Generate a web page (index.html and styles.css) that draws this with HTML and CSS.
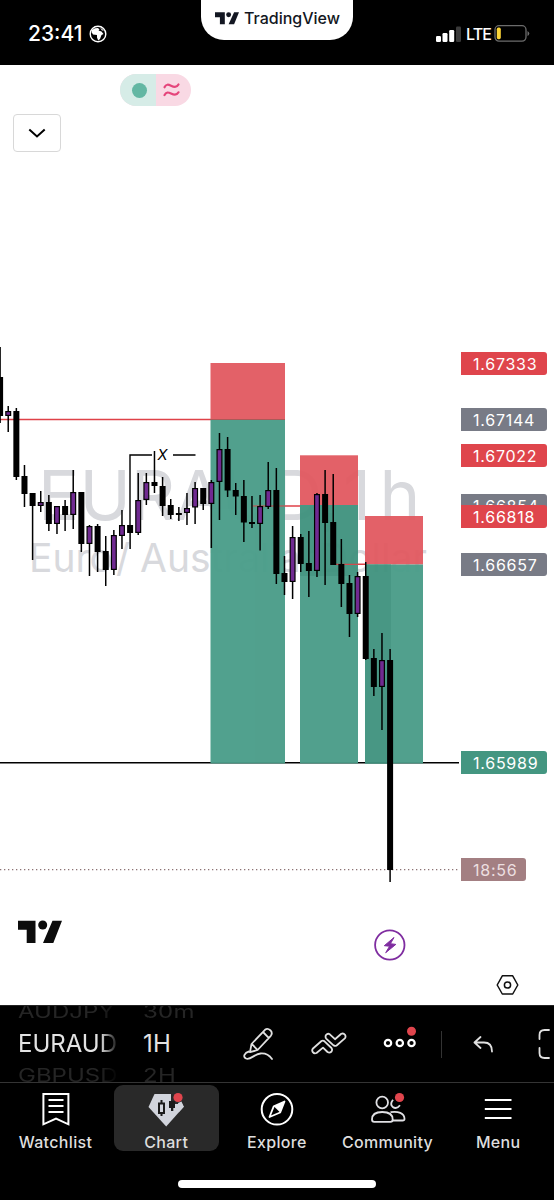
FILE: index.html
```
<!DOCTYPE html>
<html lang="en">
<head>
    <meta charset="UTF-8">
    <meta name="viewport" content="width=device-width, initial-scale=1.0">
    <title>EURAUD Chart</title>
    <link rel="stylesheet" href="styles.css">
</head>
<body>

    <header class="status-bar">
        <div class="clock">
            <span>23:41</span>
            <svg width="18" height="18" viewBox="0 0 18 18">
                <circle cx="9" cy="9" r="7.8" fill="none" stroke="#fff" stroke-width="1.4"/>
                <path d="M3 5L6 3.2L9 3L10.5 4.5L9.5 5.5L12.5 6.5L14.5 9L12.5 10L11 14L9.2 15.5L8 12.5L8 10L4 9.5L2.8 7.5Z" fill="#fff"/>
                <path d="M11 2.5L15 5.5L13 5.5Z" fill="#fff"/>
            </svg>
        </div>
        <div class="brand">
            <svg width="24" height="13" viewBox="0 0 44 23">
                <path d="M0 0H18V22H9V9H0Z M35 0H44L35 22H25Z" fill="#131722"/>
                <circle cx="25" cy="4.5" r="4.5" fill="#131722"/>
            </svg>
            <span>TradingView</span>
        </div>
        <div class="signal">
            <svg width="25" height="16" viewBox="0 0 25 16">
                <rect x="0" y="10" width="5" height="6" rx="1.2" fill="#fff"/>
                <rect x="6.5" y="7" width="5" height="9" rx="1.2" fill="#fff"/>
                <rect x="13.2" y="4" width="5" height="12" rx="1.2" fill="#fff"/>
                <rect x="20" y="0.5" width="5" height="15.5" rx="1.2" fill="#3a3a3a"/>
            </svg>
            <span>LTE</span>
            <svg width="36" height="17" viewBox="0 0 36 17">
                <rect x="1" y="0.7" width="31" height="15.4" rx="4" fill="none" stroke="#6c6c6c" stroke-width="1.3"/>
                <rect x="2.8" y="2.6" width="4" height="11.6" rx="1.6" fill="#fbd436"/>
                <path d="M33.5 6V11Q35.3 10 35.3 8.5Q35.3 7 33.5 6Z" fill="#6c6c6c"/>
            </svg>
        </div>
    </header>

    <main class="chart">
        <svg class="plot" width="554" height="940" viewBox="0 65 554 940">
            <g class="watermark">
                <text y="520" font-size="69"><tspan x="38">EURAUD,</tspan> <tspan x="343">1</tspan><tspan x="379.5">h</tspan></text>
                <text y="571.5" font-size="39"><tspan x="29">Euro</tspan> <tspan x="116">/</tspan> <tspan x="140">Australian</tspan> <tspan x="320">Dollar</tspan></text>
            </g>
            <path d="M0 762.8H459" stroke="#000" stroke-width="1.4"/>
            <path d="M0 869.7H459" stroke="#8c7274" stroke-width="1.2" stroke-dasharray="1.3 2.7"/>
            <path d="M0 419.5H211M253 506H300M333 564.3H366" stroke="#df4248" stroke-width="1.4"/>

            <!-- short positions: stop zone and target zone -->
            <g class="positions">
                <rect class="stop" x="210.5" y="363" width="74.5" height="56.5"/>
                <rect class="target" x="210.5" y="419.5" width="74.5" height="344"/>
                <rect class="stop" x="300" y="455.3" width="58" height="50"/>
                <rect class="target" x="300" y="505" width="58" height="258.5"/>
                <rect class="stop" x="365" y="516" width="58" height="48.5"/>
                <rect class="target" x="365" y="564.5" width="58" height="199"/>
                <rect class="reached" x="300" y="505" width="58" height="71"/>
                <rect class="reached" x="365" y="564.5" width="26" height="199"/>
            </g>
            <path d="M210 419.5H285" stroke="#a95a58" stroke-width="1"/>
            <path d="M253 506H285M333 564.3H358" stroke="#cf4b4e" stroke-width="1.2"/>

            <path d="M130 526V455H152M173 455H195.5" fill="none" stroke="#000" stroke-width="1.4"/>
            <text class="mark" x="157.5" y="460.3">X</text>
            <g id="candles"></g>

            <path d="M18 920.7H35.5V943H26.7V929.7H18Z M52.5 920.7H62L53.3 943H43Z" fill="#0c0c0c"/>
            <circle cx="42.7" cy="925" r="4.5" fill="#0c0c0c"/>

            <circle cx="389.8" cy="945" r="14.7" fill="none" stroke="#7f2da0" stroke-width="1.8"/>
            <path d="M394 937.5L384.3 945.7L389.6 946.2L385.7 952.7L395.8 944.4L390.4 943.7Z" fill="#7f2da0" stroke="#7f2da0" stroke-width="1" stroke-linejoin="round"/>

            <path d="M502.3 975.8H512.7L517.8 985L512.7 994H502.3L497.2 985Z" fill="none" stroke="#111" stroke-width="1.5" stroke-linejoin="round"/>
            <circle cx="507.5" cy="985" r="3.1" fill="none" stroke="#111" stroke-width="1.5"/>
        </svg>

        <div class="mode-pill">
            <span class="market-open"></span>
            <span class="delayed">
                <svg width="17" height="14" viewBox="0 0 17 14" fill="none" stroke="#e5457b" stroke-width="2.2" stroke-linecap="round">
                    <path d="M1.5 4.3C3 0.8 5.5 1.5 8 2.7C11 4.2 14 4.3 15.5 1.5"/>
                    <path d="M1.5 12.1C3 8.6 5.5 9.3 8 10.5C11 12 14 12.1 15.5 9.3"/>
                </svg>
            </span>
        </div>
        <button class="collapse">
            <svg width="18" height="10" viewBox="0 0 18 10">
                <path d="M1.3 1.5L9 8.5L16.7 1.5" fill="none" stroke="#000" stroke-width="2"/>
            </svg>
        </button>
        <div id="priceLabels"></div>
    </main>

    <section class="toolbar">
        <div class="picker symbol">
            <span class="prev">AUDJPY</span>
            <span class="current">EURAUD</span>
            <span class="next">GBPUSD</span>
        </div>
        <div class="picker interval">
            <span class="prev">30m</span>
            <span class="current">1H</span>
            <span class="next">2H</span>
        </div>
        <div class="tools">
            <svg class="tool" width="32" height="34" viewBox="0 0 32 34">
                <path d="M8.5 17L22 2.8Q24.5 0.8 27.3 3.2Q30 6 27.8 8.8L14.6 23L7 25.2Z M9 17.2L14.4 22.8M20 5L25.7 10.8"/>
                <path d="M6 24.5C1.5 25.5 -0.5 30 3 31.5C7.5 33.5 11 27 17.5 26.5C23 26 26.5 28.5 29 32"/>
            </svg>
            <svg class="tool pattern" width="36" height="24" viewBox="0 0 36 24">
                <path d="M2 16.5L10.5 9Q12 8 13.5 9.3L20.5 16Q21.8 18 20.3 19.8Q18.5 21.3 16.5 20L12 15.6L5.5 21Q3.3 22 1.8 20.2Q0.5 18 2 16.5Z"/>
                <path d="M15 3Q16.7 1 18.8 2.3L24 7.2L30.3 1.8Q32.5 0.8 34 2.7Q35.2 4.7 33.8 6.4L25.6 13.5Q24 14.5 22.5 13.3L15.2 6.6Q14 4.8 15 3Z"/>
            </svg>
            <svg class="more" width="34" height="24" viewBox="0 0 34 24">
                <g fill="none" stroke="#fff" stroke-width="2.2">
                    <circle cx="5" cy="19" r="3.2"/><circle cx="16.8" cy="19" r="3.2"/><circle cx="28.5" cy="19" r="3.2"/>
                </g>
                <circle cx="28.5" cy="7.2" r="4.5" fill="#e0454d"/>
            </svg>
            <span class="divider"></span>
            <svg class="tool undo" width="21" height="17" viewBox="0 0 21 17">
                <path d="M7.5 1L1.5 6.5L7.5 12M1.5 6.5H11Q19 6.5 19 15.5"/>
            </svg>
            <svg class="tool fullscreen" width="16" height="32" viewBox="0 0 16 32">
                <path d="M1.5 11V7Q1.5 2 6.5 2H11M1.5 20V25Q1.5 30 6.5 30H11"/>
            </svg>
        </div>
    </section>

    <nav class="tab-bar">
        <a class="tab">
            <svg width="38" height="36" viewBox="0 0 38 36" fill="none" stroke="#fff" stroke-width="2">
                <path d="M6.4 3H31.4V33.3L19 27.5L6.4 33.3Z"/>
                <path d="M11.5 9H26.5M11.5 15H26.5M11.5 21H26.5"/>
            </svg>
            <span>Watchlist</span>
        </a>
        <a class="tab active">
            <svg width="38" height="36" viewBox="0 0 38 36">
                <path d="M7.5 3H29.5L36.8 15.8L19.2 35.5L1.5 16Z" fill="#d1d4dc"/>
                <path d="M24 1H38V9L33 13H24Z" fill="#2a2a2a"/>
                <path d="M31 12L34.5 10.5L36.8 15.8L32 21Z" fill="#d1d4dc"/>
                <rect x="12" y="12.5" width="5" height="9.5" fill="none" stroke="#1a1a1a" stroke-width="2"/>
                <path d="M14.5 9V12.5M14.5 22V25" stroke="#1a1a1a" stroke-width="2"/>
                <path d="M22 10H28V17H26.3V20H24V17H22Z" fill="#1a1a1a"/>
                <circle cx="31" cy="6.5" r="4.6" fill="#e0454d"/>
            </svg>
            <span>Chart</span>
        </a>
        <a class="tab">
            <svg width="38" height="36" viewBox="0 0 38 36">
                <circle cx="19" cy="18.3" r="15.3" fill="none" stroke="#fff" stroke-width="2"/>
                <path d="M26.5 10.5L22.2 21.5L11.5 26L15.8 15.2Z" fill="none" stroke="#fff" stroke-width="1.8" stroke-linejoin="round"/>
                <path d="M26.5 10.5L22.2 21.5L15.8 15.2Z" fill="#fff"/>
            </svg>
            <span>Explore</span>
        </a>
        <a class="tab">
            <svg width="38" height="36" viewBox="0 0 38 36" fill="none" stroke="#e0e0e4" stroke-width="1.8">
                <circle cx="13.2" cy="11.5" r="5.8"/>
                <path d="M3 28.5C3 23 6.5 21 13.2 21S23.7 23 23.7 28.5Q23.7 30.8 21.5 30.8H5.2Q3 30.8 3 28.5Z"/>
                <path d="M24 8.7Q20.7 13 23.5 15.7Q27.5 18.8 31 14.3M21.5 21.2C29 20 35.5 22 35.5 28Q35.5 29.5 33.5 29.5H23.5"/>
                <circle cx="30.5" cy="6.5" r="4.6" fill="#e0454d" stroke="none"/>
            </svg>
            <span>Community</span>
        </a>
        <a class="tab">
            <svg width="38" height="36" viewBox="0 0 38 36">
                <path d="M5.8 9H32.5M5.8 18H32.5M5.8 27H32.5" stroke="#fff" stroke-width="2"/>
            </svg>
            <span>Menu</span>
        </a>
    </nav>
    <footer class="home-area"><div class="home-indicator"></div></footer>

    <script>
        const NS = "http://www.w3.org/2000/svg";
        const STEP = 8.125;

        // high, body top, body bottom, low, up candle
        const candles = [
            [347, 377, 416, 423, 0], [406, 411, 416, 432, 1], [408, 411, 477, 480, 0],
            [465, 476, 494, 507, 0], [493, 493, 506, 560, 0], [491, 502, 506, 512, 1],
            [495, 502, 524, 531, 0], [506, 506, 524, 534, 1], [500, 506, 515, 531, 0],
            [470, 492, 515, 529, 1], [492, 492, 544, 552, 0], [525, 526, 544, 576, 1],
            [524, 526, 552, 572, 0], [536, 551, 570, 586, 0], [530, 535, 570, 575, 1],
            [510, 525, 536, 549, 1], [525, 525, 533, 549, 0], [473, 500, 533, 535, 1],
            [473, 482, 500, 505, 1], [451, 482, 486, 493, 0], [477, 486, 506, 516, 0],
            [499, 505, 515, 519, 0], [507, 513, 515, 521, 0], [493, 508, 513, 525, 1],
            [482, 488, 507.5, 524, 1], [488, 488, 504, 510, 0], [480, 482, 504, 548, 1],
            [433, 449, 482, 520, 1], [437, 449, 490.5, 497, 0], [483, 490, 496.5, 515, 0],
            [480, 496, 522.5, 542, 0], [496, 522, 524, 528, 0], [495, 506, 524, 550.5, 1],
            [462, 490, 507, 509, 1], [468, 490, 574, 584, 0], [556, 573, 582, 595, 0],
            [526, 537, 582, 599, 1], [534, 537, 564, 572, 0], [531, 563, 571, 597, 0],
            [493, 494, 571, 577, 1], [470, 494, 523, 585, 0], [474, 522, 565, 565, 0],
            [539, 564, 584, 607, 0], [575, 583, 614, 637, 0], [572, 576, 614, 617, 1],
            [562, 576, 659, 660, 0], [649, 658, 687, 696, 0], [633, 660, 687, 730, 1],
            [649, 660, 870, 882, 0]
        ];

        const group = document.querySelector("#candles");
        candles.forEach(([high, top, bottom, low, up], i) => {
            const x = i * STEP + 0.1;
            const wick = document.createElementNS(NS, "path");
            wick.setAttribute("d", `M${x} ${high}V${low}`);
            wick.setAttribute("class", "wick");
            group.appendChild(wick);

            const inset = up ? 0.6 : 0;
            const body = document.createElementNS(NS, "rect");
            body.setAttribute("x", x - 3 + inset);
            body.setAttribute("y", top + inset);
            body.setAttribute("width", 6 - inset * 2);
            body.setAttribute("height", bottom - top - inset * 2);
            body.setAttribute("class", up ? "up" : "down");
            group.appendChild(body);
        });

        const labels = [
            { text: "1.67333", y: 287, type: "red" },
            { text: "1.67144", y: 343, type: "grey" },
            { text: "1.67022", y: 379, type: "red" },
            { text: "1.66854", y: 429, type: "grey" },
            { text: "1.66818", y: 440, type: "red" },
            { text: "1.66657", y: 488, type: "grey" },
            { text: "1.65989", y: 686, type: "green" },
            { text: "18:56", y: 793, type: "countdown" }
        ];
        const labelBox = document.querySelector("#priceLabels");
        labels.forEach(label => {
            labelBox.innerHTML += `<span class="price ${label.type}" style="top:${label.y}px">${label.text}</span>`;
        });
    </script>
</body>
</html>
```

FILE: styles.css
```
* {
    box-sizing: border-box;
}

body {
    margin: 0;
    width: 554px;
    height: 1200px;
    overflow: hidden;
    background-color: #000;
    font-family: Inter, "Liberation Sans", sans-serif;
}

svg {
    display: block;
    flex-shrink: 0;
}

.status-bar {
    display: grid;
    grid-template-columns: 201px 152px 201px;
    height: 65px;
    background-color: #000;
    color: #fff;
}

.clock {
    display: flex;
    align-items: center;
    gap: 7px;
    height: 67px;
    padding-left: 28px;
    font-size: 21px;
    font-weight: 500;
}

.brand {
    display: flex;
    align-items: center;
    gap: 5px;
    height: 40px;
    padding: 0 0 4px 14px;
    border-radius: 0 0 23px 23px;
    background-color: #fff;
    color: #131722;
    font-size: 16px;
    font-weight: 500;
}

.signal {
    display: flex;
    align-items: center;
    height: 67px;
    padding-left: 83px;
    font-size: 16px;
    font-weight: 500;
}

.signal span {
    width: 25px;
    margin: 0 3px 0 5px;
    letter-spacing: -0.9px;
}

.chart {
    position: relative;
    height: 940px;
    overflow: hidden;
    background-color: #fff;
}

.watermark {
    fill: #d8d9dd;
}

/* the zones let a trace of the watermark through */
.positions {
    opacity: 0.96;
}

.stop {
    fill: #e25b62;
}

.target {
    fill: #4a9d89;
}

.reached {
    fill: #41937f;
}

.mark {
    font-size: 14.5px;
    font-style: italic;
}

.wick {
    stroke: #000;
    stroke-width: 1.5;
}

.up {
    fill: #702a91;
    stroke: #000;
    stroke-width: 1.2;
}

.down {
    fill: #000;
}

.mode-pill {
    position: absolute;
    top: 9px;
    left: 120px;
    display: flex;
    width: 70.5px;
    height: 32px;
    border-radius: 16px;
    overflow: hidden;
    background-color: #f9d9e4;
}

.market-open {
    display: flex;
    align-items: center;
    width: 35.5px;
    padding-left: 11.5px;
    background-color: #d6ece7;
}

.market-open::before {
    content: "";
    width: 15px;
    height: 15px;
    border-radius: 50%;
    background-color: #63b7a3;
}

.delayed {
    display: flex;
    align-items: center;
    padding-left: 7.5px;
}

.collapse {
    position: absolute;
    top: 49px;
    left: 13px;
    display: flex;
    align-items: center;
    justify-content: center;
    width: 48px;
    height: 38px;
    padding: 0;
    border: 1.5px solid #d8d8d8;
    border-radius: 4px;
    background-color: #fff;
}

.price {
    position: absolute;
    left: 461px;
    width: 86px;
    height: 23px;
    padding-left: 12px;
    border-radius: 0 3px 3px 0;
    color: #fff;
    font-size: 16px;
    line-height: 24px;
    letter-spacing: 0.75px;
}

.red {
    background-color: #df454c;
}

.grey {
    background-color: #787b86;
}

.green {
    background-color: #449681;
}

.countdown {
    width: 65px;
    background-color: #a37f82;
    color: #ecdfe0;
}

.toolbar {
    display: flex;
    height: 77px;
    overflow: hidden;
    background-color: #000;
    border-top: 1px solid #222;
}

.picker {
    display: flex;
    flex-direction: column;
    color: #e3e3e3;
    font-size: 24px;
    line-height: 32px;
}

.picker .prev,
.picker .next {
    color: #252525;
    transform-origin: left center;
    transform: scaleY(0.75);
}

.picker .prev {
    margin-top: -10px;
}

.symbol {
    width: 99px;
    margin-left: 18px;
    overflow: hidden;
    -webkit-mask-image: linear-gradient(to right, #000 83%, transparent 102%);
    mask-image: linear-gradient(to right, #000 83%, transparent 102%);
}

.interval {
    width: 71px;
    margin-left: 26px;
    letter-spacing: 0.3px;
}

.tools {
    display: flex;
    align-items: center;
    height: 76px;
    padding-left: 29px;
}

.tool {
    fill: none;
    stroke: #e0e0e0;
    stroke-width: 1.8;
    stroke-linejoin: round;
    stroke-linecap: round;
}

.pattern {
    margin-left: 36px;
}

.more {
    margin: -16px 0 0 36px;
}

.divider {
    width: 1px;
    height: 27px;
    margin-left: 24px;
    background-color: #333;
}

.undo {
    margin-left: 31px;
}

.fullscreen {
    margin-left: 44px;
}

.tab-bar {
    display: grid;
    grid-template-columns: repeat(5, 105px);
    column-gap: 5.7px;
    height: 70px;
    padding: 2px 0 0 3px;
    border-top: 1px solid #343434;
}

.tab {
    display: flex;
    flex-direction: column;
    align-items: center;
    height: 66px;
    padding-top: 6px;
    border-radius: 9px;
    color: #dedede;
    font-size: 16px;
    font-weight: 500;
    line-height: 20px;
    letter-spacing: 0.35px;
}

.tab span {
    margin-top: 5px;
}

.tab.active {
    background-color: #292929;
}

.home-area {
    display: flex;
    justify-content: center;
    padding-top: 28px;
}

.home-indicator {
    width: 198px;
    height: 8px;
    border-radius: 4px;
    background-color: #fff;
}
```
